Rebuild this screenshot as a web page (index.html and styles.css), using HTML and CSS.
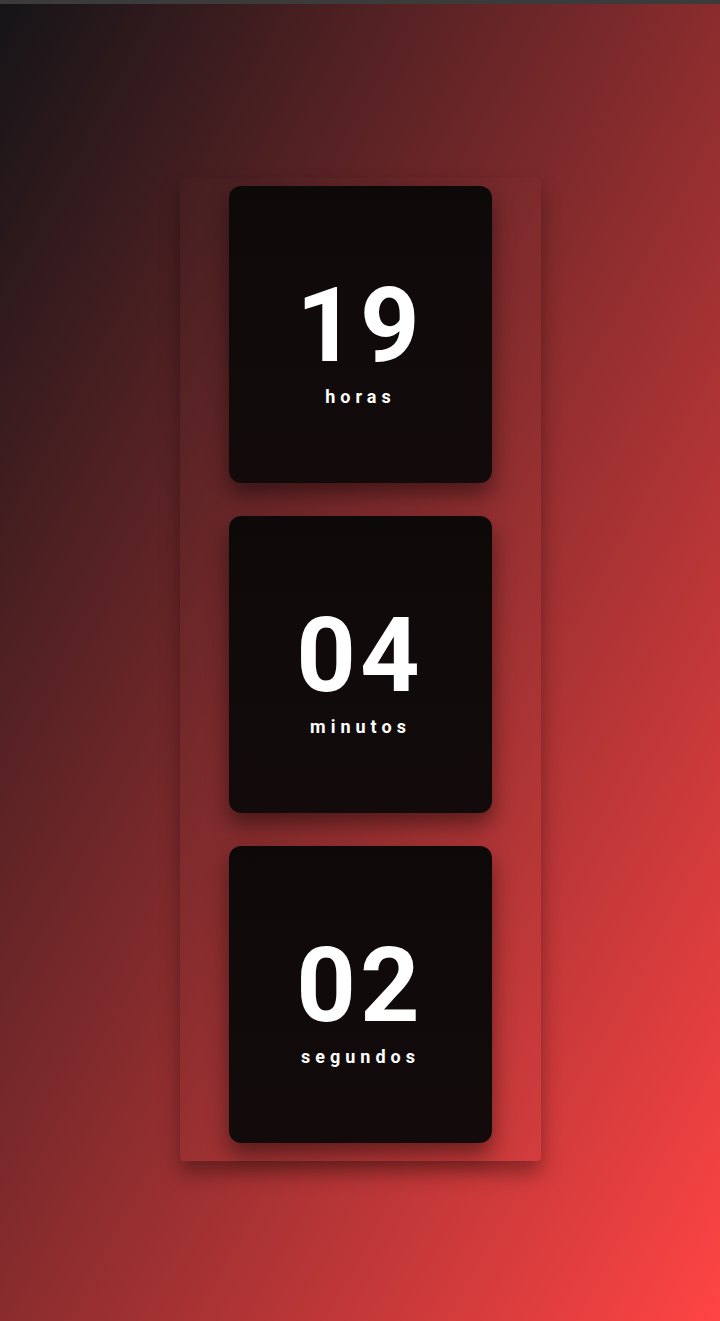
FILE: index.html
```html
<!DOCTYPE html>
<html lang="pt">
<head>
<meta charset="utf-8">
<title>Contador</title>
<link rel="stylesheet" href="styles.css">
</head>
<body>
<div class="topbar"></div>
<main class="page">
  <section class="clock">
    <div class="card">
      <div class="num">19</div>
      <div class="label">horas</div>
    </div>
    <div class="card">
      <div class="num">04</div>
      <div class="label">minutos</div>
    </div>
    <div class="card">
      <div class="num">02</div>
      <div class="label">segundos</div>
    </div>
  </section>
</main>
</body>
</html>
```

FILE: styles.css
```css
html, body {
  margin: 0;
  padding: 0;
}
body {
  width: 720px;
  min-height: 1321px;
  background: linear-gradient(to bottom right, #141417 0%, #ff4444 100%);
  font-family: Roboto, "Noto Sans", sans-serif;
  color: #fff;
  overflow: hidden;
}
.topbar {
  height: 4px;
  background: #3b3b3b;
}
.page {
  display: flex;
  justify-content: center;
  padding-top: 174px;
}
.clock {
  width: 263px;
  padding: 8px 49px 18px;
  display: flex;
  flex-direction: column;
  gap: 33px;
  background: rgba(255, 255, 255, 0.008);
  border-radius: 4px;
  box-shadow: 0 12px 20px rgba(0, 0, 0, 0.35);
}
.card {
  height: 297px;
  box-sizing: border-box;
  padding-top: 16px;
  border-radius: 12px;
  background: linear-gradient(#0e0909, #130b0b);
  box-shadow: 0 12px 22px rgba(0, 0, 0, 0.45);
  display: flex;
  flex-direction: column;
  align-items: center;
  justify-content: center;
}
.num {
  font-size: 104px;
  font-weight: 700;
  line-height: 96px;
  letter-spacing: 4px;
  margin-left: 0;
}
.label {
  font-size: 18px;
  font-weight: 700;
  letter-spacing: 5px;
  margin-left: 1px;
  margin-top: 12px;
}
```
